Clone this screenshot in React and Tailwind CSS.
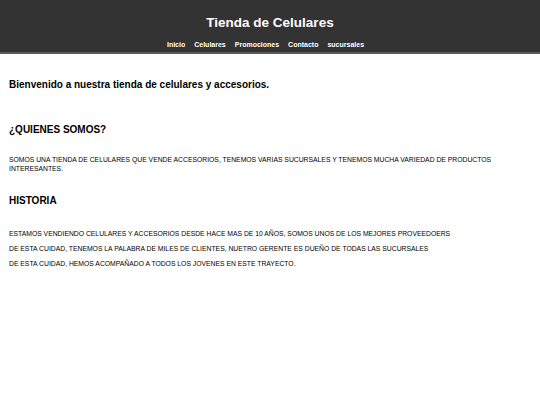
export default function App() {
  const links = ['Inicio', 'Celulares', 'Promociones', 'Contacto', 'sucursales'];
  return (
    <div className="min-h-[405px] bg-white text-black font-['Liberation_Sans',Arial,sans-serif]">
      <header className="h-[54px] bg-[#333333] border-b-2 border-[#5a5a5a] text-white text-center">
        <h1 className="pt-[14px] text-[13.5px] leading-[18px] font-bold">Tienda de Celulares</h1>
        <nav className="mt-[8px] flex justify-center text-[7px] leading-[10px] font-bold">
          {links.map((l) => (
            <a key={l} href="#" className="mr-[9px] text-white no-underline">{l}</a>
          ))}
        </nav>
      </header>

      <main className="px-[9px]">
        <h2 className="mt-[24px] text-[10px] leading-[14px] font-bold">
          Bienvenido a nuestra tienda de celulares y accesorios.
        </h2>

        <h2 className="mt-[31px] text-[10px] leading-[14px] font-bold">¿QUIENES SOMOS?</h2>
        <p className="mt-[18px] text-[6.8px] leading-[9px]">
          SOMOS UNA TIENDA DE CELULARES QUE VENDE ACCESORIOS, TENEMOS VARIAS SUCURSALES Y TENEMOS MUCHA VARIEDAD DE PRODUCTOS INTERESANTES.
        </p>

        <h2 className="mt-[21px] text-[10px] leading-[14px] font-bold">HISTORIA</h2>
        <div className="mt-[18px] text-[6.8px] leading-[15px]">
          <p>ESTAMOS VENDIENDO CELULARES Y ACCESORIOS DESDE HACE MAS DE 10 AÑOS, SOMOS UNOS DE LOS MEJORES PROVEEDOERS</p>
          <p>DE ESTA CUIDAD, TENEMOS LA PALABRA DE MILES DE CLIENTES, NUETRO GERENTE ES DUEÑO DE TODAS LAS SUCURSALES</p>
          <p>DE ESTA CUIDAD, HEMOS ACOMPAÑADO A TODOS LOS JOVENES EN ESTE TRAYECTO.</p>
        </div>
      </main>
    </div>
  );
}
